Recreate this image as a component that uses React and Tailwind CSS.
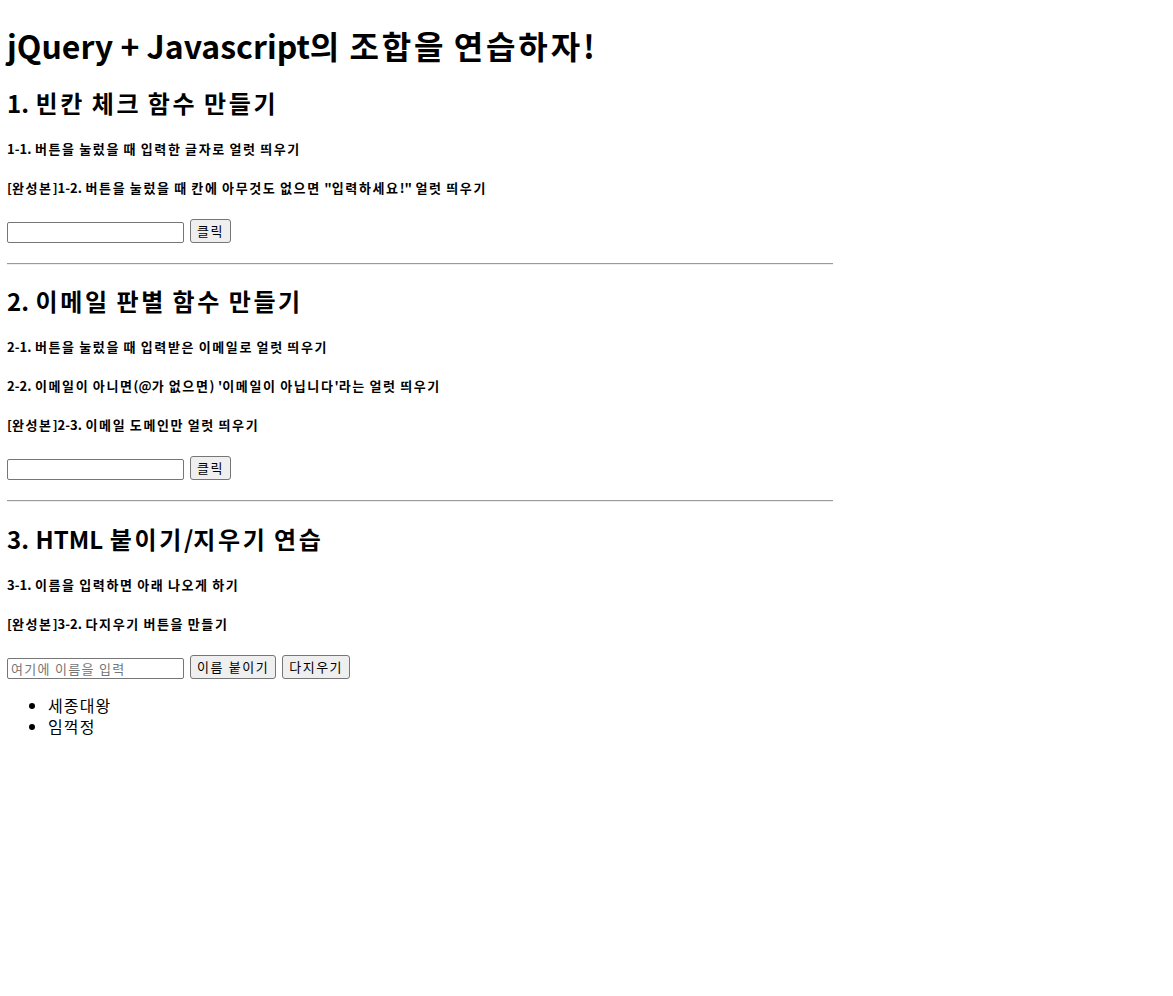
const font = { fontFamily: '"Noto Sans CJK KR", "Noto Sans", sans-serif' }

// hangul runs get a bit of extra tracking so widths come out like the original font
function K({ children, t }) {
  const parts = String(children).split(/([\uAC00-\uD7A3]+)/)
  return parts.map((p, i) =>
    i % 2 ? <span key={i} className={t}>{p}</span> : p
  )
}

function Task({ children }) {
  return (
    <h5 className="mt-[21px] text-[13px] font-bold leading-[18px] text-black [word-spacing:0.6px]">
      <K t="tracking-[0.125em]">{children}</K>
    </h5>
  )
}

function Heading({ children, mt }) {
  return (
    <h2 className={`${mt} text-[24px] font-bold leading-[32px] [word-spacing:1.2px]`}>
      <K t="tracking-[0.11em]">{children}</K>
    </h2>
  )
}

function Field({ placeholder }) {
  return (
    <input
      type="text"
      placeholder={placeholder}
      className="w-[177px] h-[21px] border border-[#767676] rounded-[2px] px-[3px] text-[13px] tracking-[0.1em] leading-[19px] placeholder:text-[#757575] bg-white"
    />
  )
}

function Btn({ children }) {
  return (
    <button className="h-[24px] ml-[6px] px-[6px] border border-[#767676] rounded-[3px] bg-[#efefef] text-[13px] leading-[20px] text-black [word-spacing:2px]">
      <K t="tracking-[0.115em]">{children}</K>
    </button>
  )
}

function Row({ children }) {
  return <div className="mt-[22px] flex items-end h-[24px]">{children}</div>
}

function Rule() {
  return <hr className="mt-[20px] w-[826px] border-0 border-t border-t-[#9a9a9a] border-b border-b-[#eeeeee]" />
}

export default function App() {
  return (
    <div className="bg-white min-h-[996px] px-[7px] pt-[25px] text-black" style={font}>
      <h1 className="text-[32px] font-bold leading-[40px]">
        <K t="tracking-[0.09em]">jQuery + Javascript의 조합을 연습하자!</K>
      </h1>

      <Heading mt="mt-[22px]">1. 빈칸 체크 함수 만들기</Heading>
      <Task>1-1. 버튼을 눌렀을 때 입력한 글자로 얼럿 띄우기</Task>
      <Task>[완성본]1-2. 버튼을 눌렀을 때 칸에 아무것도 없으면 "입력하세요!" 얼럿 띄우기</Task>
      <Row>
        <Field />
        <Btn>클릭</Btn>
      </Row>
      <Rule />

      <Heading mt="mt-[20px]">2. 이메일 판별 함수 만들기</Heading>
      <Task>2-1. 버튼을 눌렀을 때 입력받은 이메일로 얼럿 띄우기</Task>
      <Task>2-2. 이메일이 아니면(@가 없으면) '이메일이 아닙니다'라는 얼럿 띄우기</Task>
      <Task>[완성본]2-3. 이메일 도메인만 얼럿 띄우기</Task>
      <Row>
        <Field />
        <Btn>클릭</Btn>
      </Row>
      <Rule />

      <Heading mt="mt-[21px]">3. HTML 붙이기/지우기 연습</Heading>
      <Task>3-1. 이름을 입력하면 아래 나오게 하기</Task>
      <Task>[완성본]3-2. 다지우기 버튼을 만들기</Task>
      <Row>
        <Field placeholder="여기에 이름을 입력" />
        <Btn>이름 붙이기</Btn>
        <Btn>다지우기</Btn>
      </Row>
      <ul className="mt-[16px] list-disc pl-[41px] text-[16px] leading-[21px]">
        <li><K t="tracking-[0.07em]">세종대왕</K></li>
        <li><K t="tracking-[0.07em]">임꺽정</K></li>
      </ul>
    </div>
  )
}
